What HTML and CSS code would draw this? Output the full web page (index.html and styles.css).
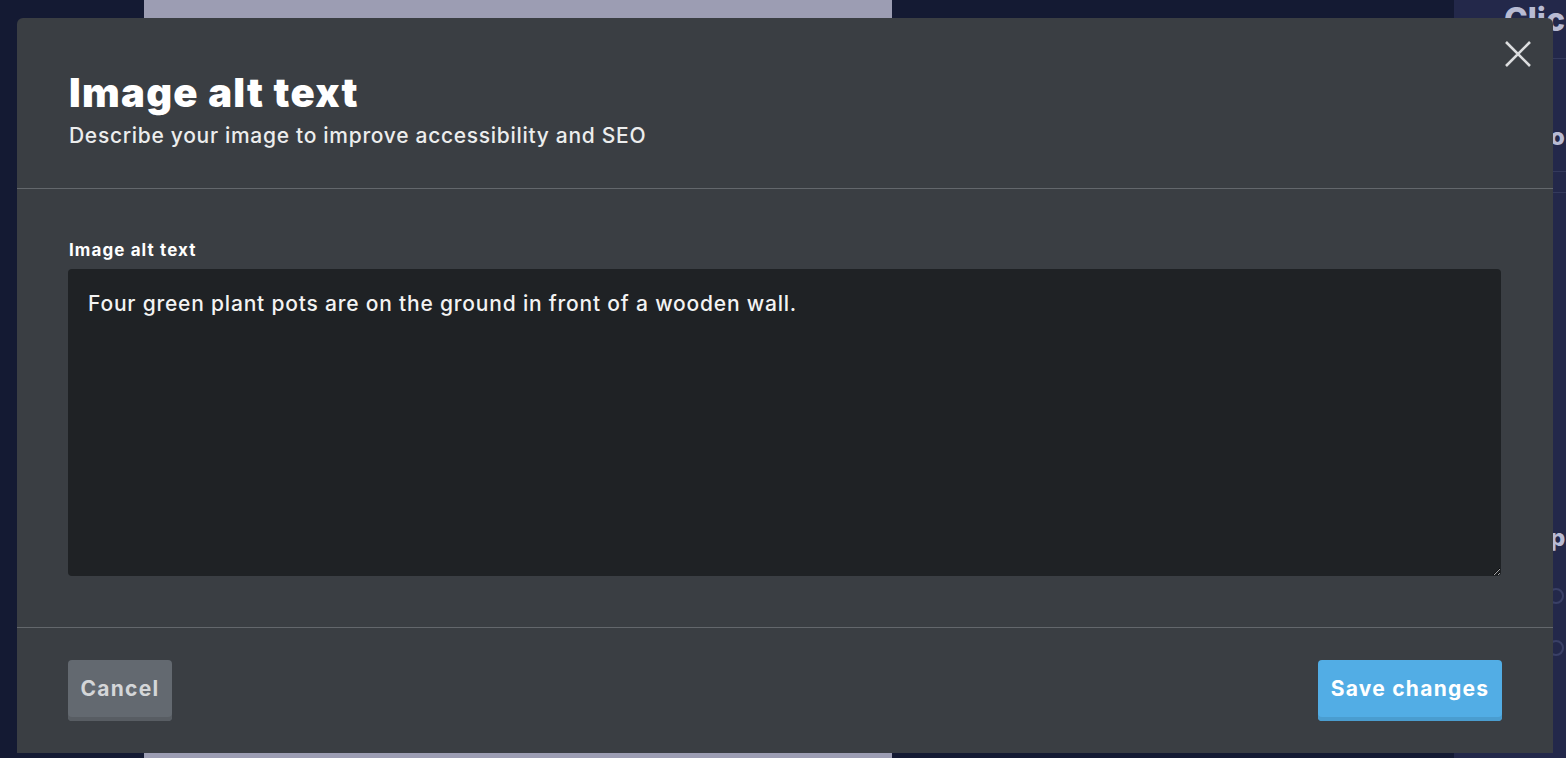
FILE: index.html
```html
<!DOCTYPE html>
<html lang="en">
<head>
<meta charset="utf-8">
<title>Image alt text</title>
<link rel="stylesheet" href="styles.css">
</head>
<body>
<div class="page">
  <div class="col-left"></div>
  <div class="col-preview"></div>
  <div class="col-mid"></div>
  <div class="col-side">
    <div class="side-title">Clic</div>
    <div class="side-line"></div>
    <div class="side-item">o</div>
    <div class="side-line"></div>
    <div class="side-line"></div>
    <div class="side-item lower">p</div>
    <div class="side-dot"></div>
    <div class="side-dot"></div>
  </div>
</div>

<div class="modal" role="dialog" aria-labelledby="modal-title">
  <button class="close" aria-label="Close">
    <svg width="26" height="26" viewBox="0 0 26 26" aria-hidden="true">
      <path d="M1 1 L25 25 M25 1 L1 25" stroke="#dcdddf" stroke-width="2.6" fill="none"/>
    </svg>
  </button>
  <header class="modal-header">
    <h1 id="modal-title" class="modal-title">Image alt text</h1>
    <p class="modal-subtitle">Describe your image to improve accessibility and SEO</p>
  </header>
  <section class="modal-body">
    <label class="field-label" for="alt">Image alt text</label>
    <textarea id="alt" class="field-input">Four green plant pots are on the ground in front of a wooden wall.</textarea>
  </section>
  <footer class="modal-footer">
    <button class="btn btn-cancel">Cancel</button>
    <button class="btn btn-save">Save changes</button>
  </footer>
</div>
</body>
</html>
```

FILE: styles.css
```css
* { box-sizing: border-box; }

html, body {
  margin: 0;
  height: 100%;
}

body {
  background: #141a33;
  font-family: Inter, "Open Sans", sans-serif;
  overflow: hidden;
}

.page {
  display: flex;
  height: 758px;
}

.col-left { width: 144px; background: #141a33; }
.col-preview { width: 748px; background: #9c9db3; }
.col-mid { flex: 1; background: #141a33; }
.col-side {
  width: 112px;
  background: #23284a;
  display: flex;
  flex-direction: column;
  padding-left: 50px;
  color: #b8bbd3;
  font-weight: 800;
  overflow: hidden;
}

.side-title { font-size: 32px; margin-top: 2px; line-height: 36px; white-space: nowrap; }
.side-line { height: 1px; background: #343a5c; margin: 20px 0 0 -50px; }
.side-item { font-size: 24px; line-height: 29px; margin-top: 63px; padding-left: 46px; }
.side-item.lower { margin-top: 330px; }
.side-dot {
  width: 16px;
  height: 16px;
  border-radius: 50%;
  border: 2px solid #3a4066;
  margin: 36px 0 0 44px;
}
.side-dot + .side-dot { margin-top: 36px; }

.modal {
  position: absolute;
  left: 17px;
  top: 18px;
  width: 1536px;
  height: 735px;
  background: #3a3e43;
  border-radius: 6px 6px 0 0;
  display: flex;
  flex-direction: column;
  color: #fff;
}

.close {
  position: absolute;
  right: 22px;
  top: 23px;
  width: 26px;
  height: 26px;
  padding: 0;
  border: 0;
  background: none;
  display: flex;
}

.modal-header {
  height: 171px;
  padding: 51px 52px 0;
  border-bottom: 1px solid #63676c;
}

.modal-title {
  margin: 0;
  font-size: 40px;
  font-weight: 900;
  line-height: 48px;
  letter-spacing: 1.3px;
}

.modal-subtitle {
  margin: 5px 0 0;
  font-size: 21px;
  font-weight: 500;
  line-height: 28px;
  color: #eceded;
  letter-spacing: 0.7px;
}

.modal-body {
  height: 439px;
  padding: 50px 52px 0 51px;
  border-bottom: 1px solid #63676c;
  display: flex;
  flex-direction: column;
}

.field-label {
  font-size: 17px;
  font-weight: 700;
  line-height: 22px;
  margin-left: 1px;
  margin-bottom: 8px;
  letter-spacing: 1.1px;
}

.field-input {
  height: 307px;
  width: 100%;
  background: #1f2225;
  border: 0;
  border-radius: 4px;
  color: #f3f3f3;
  font-family: inherit;
  font-size: 21px;
  font-weight: 500;
  line-height: 28px;
  letter-spacing: 0.8px;
  padding: 21px 20px;
  resize: vertical;
  outline: none;
}

.modal-footer {
  flex: 1;
  display: flex;
  justify-content: space-between;
  align-items: flex-start;
  padding: 32px 51px 0;
}

.btn {
  height: 61px;
  border: 0;
  border-radius: 4px;
  font-family: inherit;
  font-size: 21px;
  font-weight: 700;
  letter-spacing: 1.25px;
  padding: 0 0 4px;
  cursor: pointer;
}

.btn-cancel {
  background: #636970;
  color: #d4d6d8;
  box-shadow: inset 0 -4px 0 #585d63;
  width: 104px;
}

.btn-save {
  background: #52ade5;
  color: #fff;
  box-shadow: inset 0 -4px 0 #4a9dd0;
  width: 184px;
}
```
